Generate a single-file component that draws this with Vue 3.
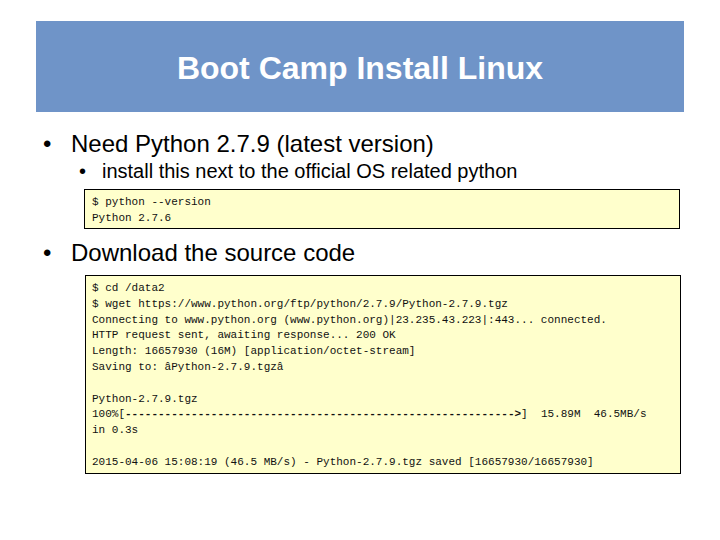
<script setup>
const first = ['$ python --version', 'Python 2.7.6']
const before = [
  '$ cd /data2',
  '$ wget https://www.python.org/ftp/python/2.7.9/Python-2.7.9.tgz',
  'Connecting to www.python.org (www.python.org)|23.235.43.223|:443... connected.',
  'HTTP request sent, awaiting response... 200 OK',
  'Length: 16657930 (16M) [application/octet-stream]',
  'Saving to: âPython-2.7.9.tgzâ',
  ' ',
  'Python-2.7.9.tgz',
]
const after = ['in 0.3s', ' ', '2015-04-06 15:08:19 (46.5 MB/s) - Python-2.7.9.tgz saved [16657930/16657930]']
const bar = '-'.repeat(59) + '>'
const speed = ']  15.89M  46.5MB/s'
</script>

<template>
  <div class="slide">
    <header class="title">Boot Camp Install Linux</header>
    <div class="row l1 first"><span class="dot">•</span><span>Need Python 2.7.9 (latest version)</span></div>
    <div class="row l2"><span class="dot">•</span><span>install this next to the official OS related python</span></div>
    <div class="code short">
      <div v-for="line in first" :key="line" class="line">{{ line }}</div>
    </div>
    <div class="row l1 second"><span class="dot">•</span><span>Download the source code</span></div>
    <div class="code long">
      <div v-for="(line, i) in before" :key="i" class="line">{{ line }}</div>
      <div class="line">100%[<b class="bar">{{ bar }}</b>{{ speed }}</div>
      <div v-for="(line, i) in after" :key="'a' + i" class="line">{{ line }}</div>
    </div>
  </div>
</template>

<style scoped>
.slide {
  width: 720px;
  height: 540px;
  padding-top: 21px;
  box-sizing: border-box;
  background: #fff;
  color: #000;
  font-family: "Liberation Sans", Arial, sans-serif;
  overflow: hidden;
}
.title {
  margin: 0 36px;
  height: 91px;
  background: #6f94c8;
  color: #fff;
  font-size: 32px;
  font-weight: 700;
  display: flex;
  align-items: center;
  justify-content: center;
  padding-top: 4px;
  box-sizing: border-box;
}
.row { display: flex; }
.l1 { font-size: 24px; line-height: 28px; padding-left: 43px; }
.l1 .dot { width: 28px; }
.l2 { font-size: 20px; line-height: 24px; padding-left: 79px; margin-top: 1px; }
.l2 .dot { width: 23px; }
.first { margin-top: 18px; }
.second { margin-top: 10px; }
.code {
  background: #ffffcc;
  border: 1px solid #000;
  font-family: "Liberation Mono", monospace;
  font-size: 11px;
  line-height: 15.8px;
  box-sizing: border-box;
  color: #111;
}
.line { white-space: pre; height: 15.8px; }
.short { margin: 6px 0 0 84px; width: 596px; height: 40px; padding: 5px 0 0 7px; }
.long { margin: 8px 0 0 85px; width: 596px; height: 199px; padding: 5px 0 0 6px; }
.bar { font-weight: 700; }
</style>
